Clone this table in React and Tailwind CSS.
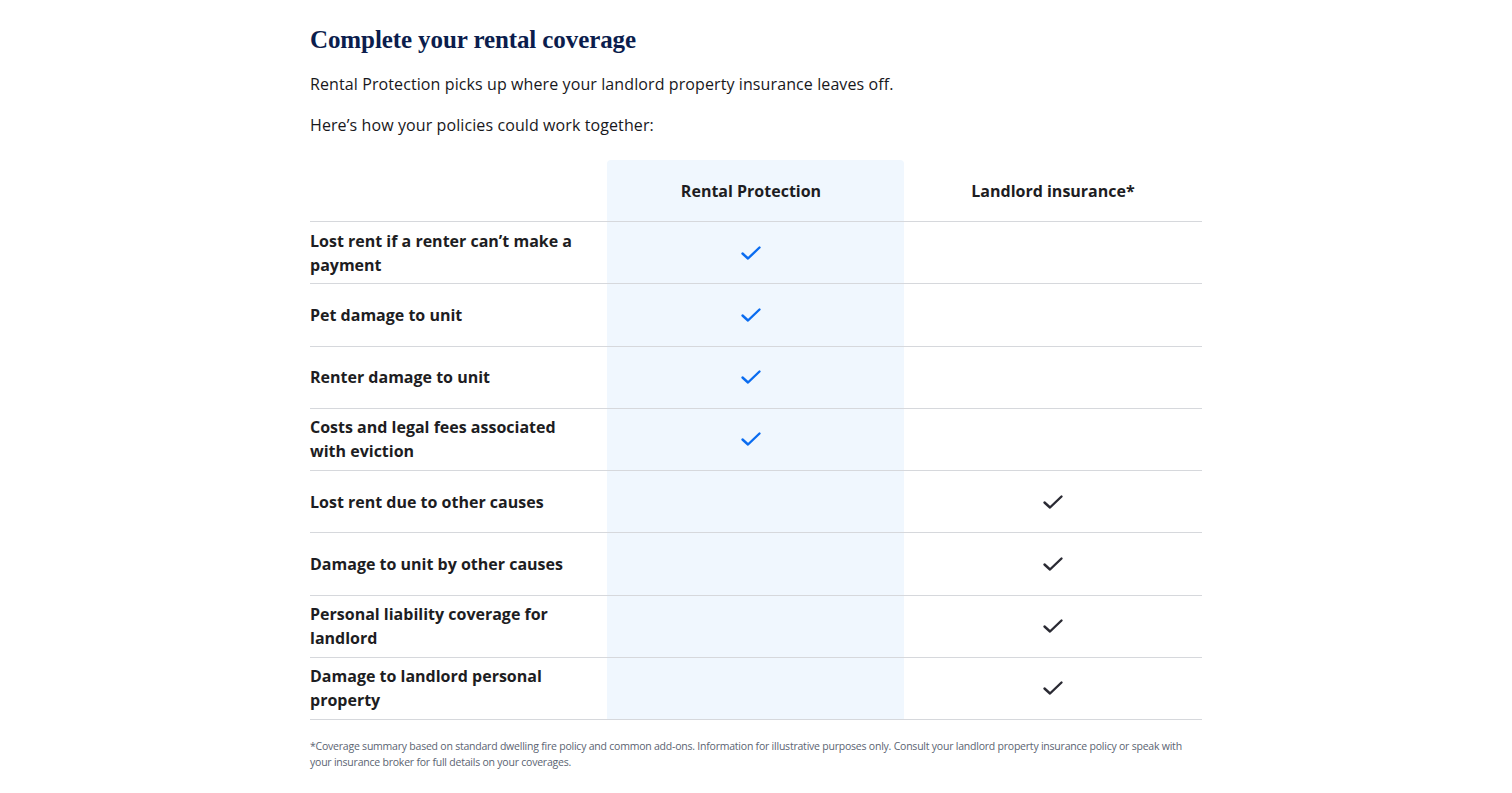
const rows = [
  { label: 'Lost rent if a renter can’t make a payment', rp: true, li: false },
  { label: 'Pet damage to unit', rp: true, li: false },
  { label: 'Renter damage to unit', rp: true, li: false },
  { label: 'Costs and legal fees associated with eviction', rp: true, li: false },
  { label: 'Lost rent due to other causes', rp: false, li: true },
  { label: 'Damage to unit by other causes', rp: false, li: true },
  { label: 'Personal liability coverage for landlord', rp: false, li: true },
  { label: 'Damage to landlord personal property', rp: false, li: true },
];

const Check = ({ className }) => (
  <svg className={className} width="24" height="24" viewBox="0 0 24 24" fill="none" stroke="currentColor">
    <path d="M3.5 12.5l5.5 5 11.5-11" strokeWidth={2.4} strokeLinecap="round" strokeLinejoin="round" />
  </svg>
);

export default function App() {
  return (
    <div className="min-h-screen bg-white font-['Open_Sans',sans-serif] text-[#1d1d22]">
      <div className="w-[892px] pt-[24px] ml-[310px]">
        <h1 className="font-['Liberation_Serif',serif] font-bold text-[25px] leading-[32px] text-[#0b1d4d] tracking-[-0.1px]">
          Complete your rental coverage
        </h1>
        <p className="mt-[16px] text-[16px] leading-[24px] text-[#18181c] tracking-[0.1px]">
          Rental Protection picks up where your landlord property insurance leaves off.
        </p>
        <p className="mt-[17px] text-[16px] leading-[24px] text-[#18181c] tracking-[0.1px]">
          Here’s how your policies could work together:
        </p>

        <div className="mt-[23px]">
          <div className="grid grid-cols-[297px_297px_298px] border-b border-[#d6d8dc]">
            <div />
            <div className="h-[61px] bg-[#f0f7fe] rounded-t-[4px] flex items-center justify-center pr-[9px] font-bold text-[16px]">
              Rental Protection
            </div>
            <div className="h-[61px] flex items-center justify-center font-bold text-[16px]">
              Landlord insurance*
            </div>
          </div>
          {rows.map((row) => (
            <div key={row.label} className="grid grid-cols-[297px_297px_298px] border-b border-[#d6d8dc]">
              <div className="h-[61.25px] flex items-center pr-[30px] font-bold text-[16px] leading-[24px]">
                {row.label}
              </div>
              <div className="bg-[#f0f7fe] flex items-center justify-center pr-[9px]">
                {row.rp && <Check className="text-[#0a6cf0]" />}
              </div>
              <div className="flex items-center justify-center">
                {row.li && <Check className="text-[#2a2a33]" />}
              </div>
            </div>
          ))}
        </div>

        <p className="mt-[18px] max-w-[874px] text-[10.5px] leading-[16px] text-[#5b6472] tracking-[-0.22px]">
          *Coverage summary based on standard dwelling fire policy and common add-ons. Information for illustrative purposes only. Consult your landlord property insurance policy or speak with your insurance broker for full details on your coverages.
        </p>
      </div>
    </div>
  );
}
